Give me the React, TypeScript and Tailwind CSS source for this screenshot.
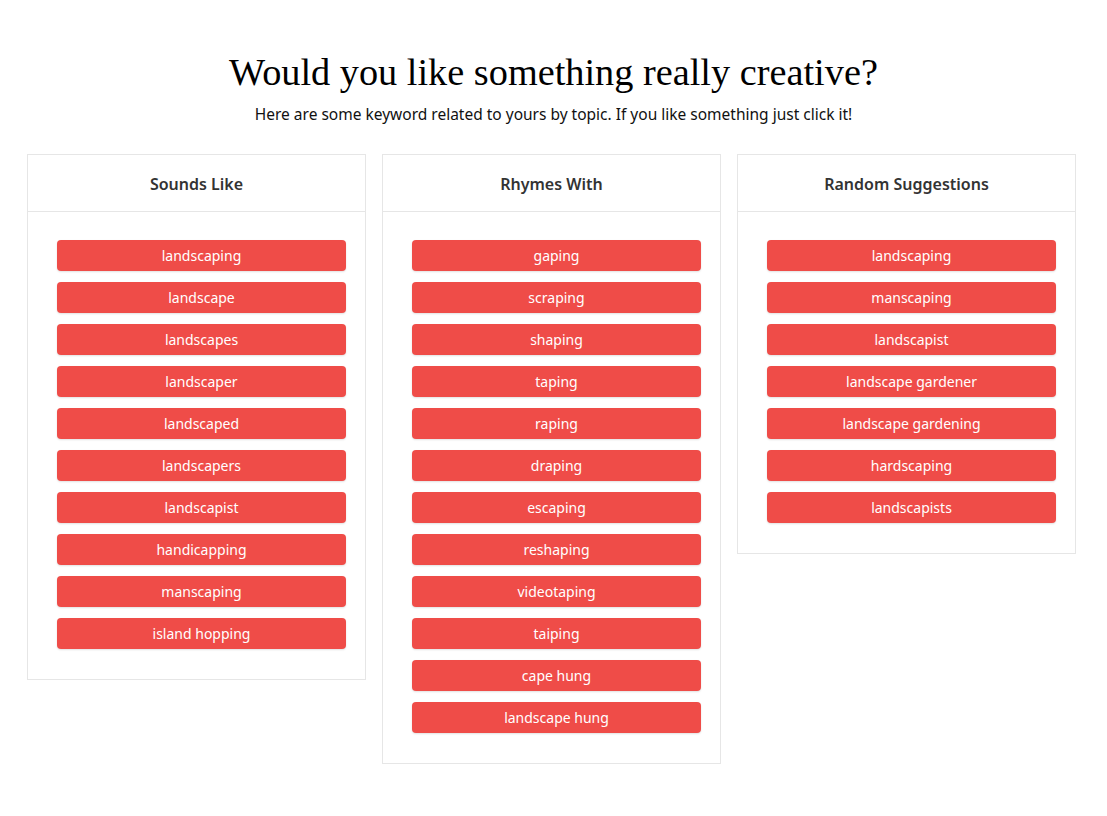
const sections = [
  {
    title: 'Sounds Like',
    words: [
      'landscaping',
      'landscape',
      'landscapes',
      'landscaper',
      'landscaped',
      'landscapers',
      'landscapist',
      'handicapping',
      'manscaping',
      'island hopping',
    ],
  },
  {
    title: 'Rhymes With',
    words: [
      'gaping',
      'scraping',
      'shaping',
      'taping',
      'raping',
      'draping',
      'escaping',
      'reshaping',
      'videotaping',
      'taiping',
      'cape hung',
      'landscape hung',
    ],
  },
  {
    title: 'Random Suggestions',
    words: [
      'landscaping',
      'manscaping',
      'landscapist',
      'landscape gardener',
      'landscape gardening',
      'hardscaping',
      'landscapists',
    ],
  },
]

function WordCard({ title, words }: { title: string; words: string[] }) {
  return (
    <div className="w-[339px] border border-[#e6e6e6] bg-white">
      <div className="h-[57px] flex items-center justify-center border-b border-[#e6e6e6]">
        <h3 className="text-[16px] font-semibold text-[#333333] pt-[1px]">{title}</h3>
      </div>
      <div className="pl-[29px] pr-[19px] pt-[28px] pb-[30px] flex flex-col gap-[11px]">
        {words.map((word) => (
          <button
            key={word}
            className="h-[31px] w-full rounded-[4px] bg-[#ef4c48] text-white text-[14px] shadow-[0_1px_2px_rgba(0,0,0,0.12)]"
          >
            {word}
          </button>
        ))}
      </div>
    </div>
  )
}

export default function App() {
  return (
    <div className="min-h-[816px] bg-white font-['Noto_Sans',sans-serif] text-black">
      <div className="pt-[49px] text-center">
        <h1 className="text-[38.3px] leading-[46px] font-['Liberation_Serif',serif] text-black">
          Would you like something really creative?
        </h1>
        <p className="mt-[7px] text-[15.5px] leading-[24px] text-[#111]">
          Here are some keyword related to yours by topic. If you like something just click it!
        </p>
      </div>
      <div className="mt-[28px] pl-[27px] flex items-start gap-4">
        {sections.map((s) => (
          <WordCard key={s.title} title={s.title} words={s.words} />
        ))}
      </div>
    </div>
  )
}
